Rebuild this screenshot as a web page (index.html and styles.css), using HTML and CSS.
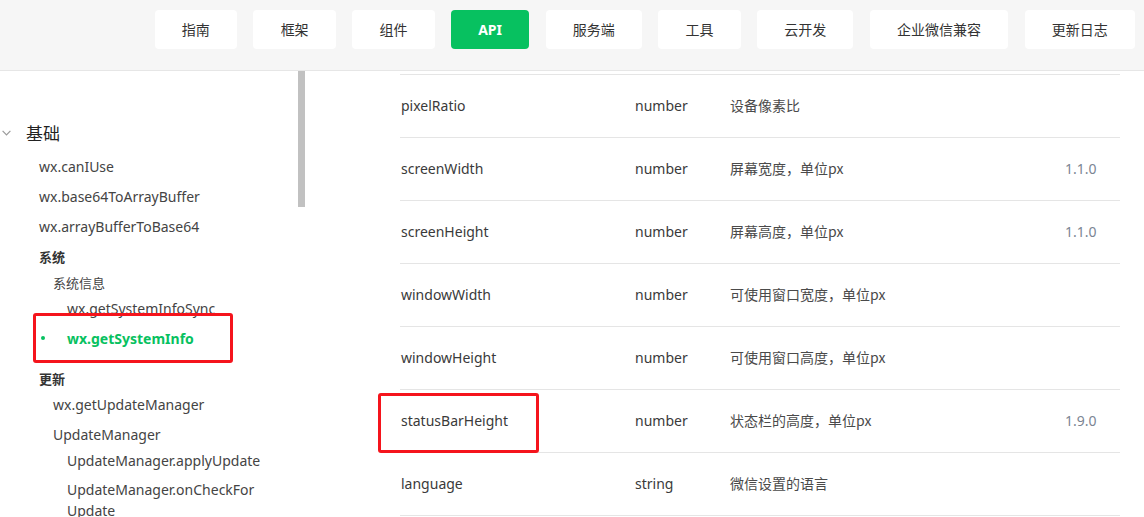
FILE: index.html
```html
<!DOCTYPE html>
<html lang="zh-CN">
<head>
<meta charset="utf-8">
<title>API - getSystemInfo</title>
<link rel="stylesheet" href="styles.css">
</head>
<body>
<header class="topbar">
  <nav class="nav">
    <a class="nav-btn">指南</a>
    <a class="nav-btn">框架</a>
    <a class="nav-btn">组件</a>
    <a class="nav-btn active">API</a>
    <a class="nav-btn">服务端</a>
    <a class="nav-btn">工具</a>
    <a class="nav-btn">云开发</a>
    <a class="nav-btn">企业微信兼容</a>
    <a class="nav-btn">更新日志</a>
  </nav>
</header>
<div class="page">
  <aside class="sidebar">
    <div class="group-title">
      <svg class="chev" width="9" height="6" viewBox="0 0 9 6"><path d="M0.6 0.8 L4.5 4.8 L8.4 0.8" fill="none" stroke="#9a9a9a" stroke-width="1.2"/></svg>
      <span>基础</span>
    </div>
    <div class="item l1 h30">wx.canIUse</div>
    <div class="item l1 h30">wx.base64ToArrayBuffer</div>
    <div class="item l1 h30">wx.arrayBufferToBase64</div>
    <div class="section l1 h30">系统</div>
    <div class="item small l2 h22">系统信息</div>
    <div class="item l3 h30">wx.getSystemInfoSync</div>
    <div class="item l3 h30 current"><span class="dot"></span>wx.getSystemInfo</div>
    <div class="section l1 h30 sec-gap">更新</div>
    <div class="item l2 h22">wx.getUpdateManager</div>
    <div class="item l2 h30 gap4">UpdateManager</div>
    <div class="item l3 h22">UpdateManager.applyUpdate</div>
    <div class="item l3 wrap">UpdateManager.onCheckFor Update</div>
    <div class="mark mark-side"></div>
    <div class="thumb"></div>
  </aside>
  <main class="main">
    <div class="table">
      <div class="row"><span class="c-name">pixelRatio</span><span class="c-type">number</span><span class="c-desc">设备像素比</span><span class="c-ver"></span></div>
      <div class="row"><span class="c-name">screenWidth</span><span class="c-type">number</span><span class="c-desc">屏幕宽度，单位px</span><span class="c-ver">1.1.0</span></div>
      <div class="row"><span class="c-name">screenHeight</span><span class="c-type">number</span><span class="c-desc">屏幕高度，单位px</span><span class="c-ver">1.1.0</span></div>
      <div class="row"><span class="c-name">windowWidth</span><span class="c-type">number</span><span class="c-desc">可使用窗口宽度，单位px</span><span class="c-ver"></span></div>
      <div class="row"><span class="c-name">windowHeight</span><span class="c-type">number</span><span class="c-desc">可使用窗口高度，单位px</span><span class="c-ver"></span></div>
      <div class="row"><span class="c-name">statusBarHeight</span><span class="c-type">number</span><span class="c-desc">状态栏的高度，单位px</span><span class="c-ver">1.9.0</span></div>
      <div class="row"><span class="c-name">language</span><span class="c-type">string</span><span class="c-desc">微信设置的语言</span><span class="c-ver"></span></div>
    </div>
    <div class="mark mark-main"></div>
  </main>
</div>
</body>
</html>
```

FILE: styles.css
```css
* { box-sizing: border-box; }
html, body { margin: 0; padding: 0; }
body {
  width: 1144px;
  height: 517px;
  overflow: hidden;
  background: #fff;
  font-family: "Noto Sans", "Noto Sans CJK SC", sans-serif;
  color: #333;
}

.topbar {
  height: 71px;
  background: #f6f6f6;
  border-bottom: 1px solid #e6e6e6;
}
.nav {
  display: flex;
  justify-content: flex-end;
  gap: 16.4px;
  padding: 10px 9px 0 0;
}
.nav-btn {
  height: 39px;
  padding: 0 27.2px;
  background: #fff;
  border-radius: 4px;
  font-size: 14px;
  line-height: 39px;
  color: #333;
  font-family: "Noto Sans CJK SC", sans-serif;
}
.nav-btn.active {
  background: #07c160;
  color: #fff;
  font-weight: 700;
  font-family: "Noto Sans", "Noto Sans CJK SC", sans-serif;
}

.page {
  display: flex;
  height: 446px;
}

.sidebar {
  position: relative;
  width: 305px;
  flex: none;
  overflow: hidden;
  padding-top: 45px;
}
.thumb {
  position: absolute;
  top: 0;
  right: 0;
  width: 7px;
  height: 136px;
  background: #c1c1c1;
}
.group-title {
  display: flex;
  align-items: center;
  height: 33px;
  margin-bottom: 2px;
  font-size: 17px;
  line-height: 1;
  color: #222;
  font-family: "Noto Sans CJK SC", sans-serif;
}
.chev { margin: 0 15px 0 2px; }
.item {
  display: flex;
  align-items: center;
  font-size: 14px;
  color: #444;
}
.item.small { font-size: 13px; font-family: "Noto Sans CJK SC", sans-serif; }
.section {
  display: flex;
  align-items: center;
  font-size: 13px;
  font-weight: 700;
  color: #333;
  font-family: "Noto Sans CJK SC", sans-serif;
}
.l1 { padding-left: 39px; }
.l2 { padding-left: 53px; }
.l3 { padding-left: 67px; }
.h30 { height: 30px; }
.h22 { height: 22px; }
.sec-gap { margin-top: 10px; }
.gap4 { margin-top: 4px; }
.wrap {
  display: block;
  margin-top: 8px;
  line-height: 21px;
  width: 280px;
  padding-right: 60px;
}
.current {
  color: #07c160;
  font-weight: 700;
  position: relative;
}
.dot {
  position: absolute;
  left: 41px;
  top: 13px;
  width: 4px;
  height: 4px;
  border-radius: 50%;
  background: #07c160;
}

.mark {
  position: absolute;
  border: 3px solid #f5141c;
  border-radius: 3px;
}
.mark-side { left: 33px; top: 242px; width: 200px; height: 50px; }

.main {
  position: relative;
  flex: 1;
  padding: 3px 0 0 95px;
}
.table {
  width: 720px;
  border-top: 1px solid #e5e5e5;
}
.row {
  display: flex;
  align-items: center;
  height: 63px;
  padding-bottom: 2px;
  border-bottom: 1px solid #e5e5e5;
  font-size: 14px;
  color: #3a3a3a;
}
.c-name { width: 235px; padding-left: 1px; }
.c-type { width: 95px; }
.c-desc { width: 335px; color: #4a4a4a; font-size: 14px; font-family: "Noto Sans CJK SC", sans-serif; }
.c-ver { color: #7b8593; }
.mark-main { left: 73px; top: 322px; width: 161px; height: 60px; }
```
